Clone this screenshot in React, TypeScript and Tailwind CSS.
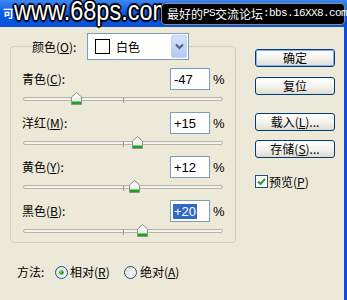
import React from "react";

const U = ({ c }: { c: string }) => <span className="underline underline-offset-[1px]">{c}</span>;

function Thumb() {
  return (
    <svg width="11" height="13" viewBox="0 0 11 13">
      <defs>
        <linearGradient id="tg" x1="0" y1="0" x2="0" y2="1">
          <stop offset="0" stopColor="#ffffff" />
          <stop offset="1" stopColor="#e6e4dc" />
        </linearGradient>
      </defs>
      <polygon points="0.5,5 5.5,0.5 10.5,5 10.5,12.5 0.5,12.5" fill="url(#tg)" stroke="#8e8f8f" strokeWidth="1" />
      <rect x="1" y="10" width="9" height="2" fill="#21a121" />
      <rect x="1" y="9" width="9" height="1" fill="#7bd17b" />
    </svg>
  );
}

function Slider({ value }: { value: number }) {
  const left = 53.5 + value * 0.995 * 0.995 + 46.5; // center-based
  const cx = 100 + value * 0.995;
  return (
    <div className="relative w-[200px] h-[14px] ml-[12px]">
      <div className="absolute left-0 right-0 top-[5px] h-[4px] rounded-full border border-[#b5b3a6] bg-[#f3f2ec]" />
      <div className="absolute left-[100px] top-[5px] w-px h-[6px] bg-[#9d9b8f]" />
      <div className="absolute top-0" style={{ left: cx - 5.5 }} data-l={left}>
        <Thumb />
      </div>
    </div>
  );
}

function Row({ label, m, value, num, selected, first }: { label: string; m: string; value: string; num: number; selected?: boolean; first?: boolean }) {
  return (
    <div className={first ? "flex flex-col" : "flex flex-col mt-[2px]"}>
      <div className="flex items-center h-[22px] pr-[12px]">
        <div className="flex-1 pl-[11px] leading-none">
          {label}(<U c={m} />):
        </div>
        <div className="w-[40px] h-[22px] border border-[#7f9db9] bg-white flex items-center pl-[2px] font-['Liberation_Sans',sans-serif] text-[13px] leading-none">
          {selected ? <span className="bg-[#316ac5] text-white px-px py-[1px]">{value}</span> : <span className="px-px">{value}</span>}
        </div>
        <div className="ml-[3px] w-[10px] font-['Liberation_Sans',sans-serif] text-[13px] leading-none">%</div>
      </div>
      <div className="h-[20px] pt-[2px]">
        <Slider value={num} />
      </div>
    </div>
  );
}

function Button({ children, def }: { children: React.ReactNode; def?: boolean }) {
  return (
    <div className="w-[80px] h-[18px] rounded-[3px] border border-[#003c74] bg-gradient-to-b from-[#ffffff] via-[#f4f3ee] to-[#dedcd2] flex items-center justify-center leading-none">
      <div className={def ? "w-full h-full rounded-[2px] border border-[#89adf0] flex items-center justify-center" : "w-full h-full flex items-center justify-center"}>
        {children}
      </div>
    </div>
  );
}

function Radio({ on }: { on?: boolean }) {
  return (
    <svg width="13" height="13" viewBox="0 0 13 13">
      <defs>
        <linearGradient id="rg" x1="0" y1="0" x2="1" y2="1">
          <stop offset="0" stopColor="#dcdbd4" />
          <stop offset="1" stopColor="#ffffff" />
        </linearGradient>
      </defs>
      <circle cx="6.5" cy="6.5" r="6" fill="url(#rg)" stroke="#1c5180" strokeWidth="1" />
      {on && <circle cx="6.5" cy="6.5" r="2.3" fill="#21a121" />}
      {on && <circle cx="6" cy="6" r="0.9" fill="#8be28b" />}
    </svg>
  );
}

export default function App() {
  return (
    <div className="w-[347px] h-[300px] bg-[#ece9d8] flex flex-col overflow-hidden font-['Noto_Sans_CJK_SC',sans-serif] text-[12px] text-black">
      <div className="h-[27px] shrink-0 flex items-center bg-gradient-to-b from-[#3d86f5] via-[#0a5ae6] to-[#0a4fd6]">
        <span className="w-[14px] pl-[3px] text-white text-[11px] font-bold leading-none">可</span>
        <div className="w-[147px] h-full relative">
          <span className="absolute left-0 top-[-3px] whitespace-nowrap origin-left scale-x-[0.84] font-['Liberation_Sans',sans-serif] text-[28px] leading-[28px] text-white [text-shadow:0_0_2px_#000,1px_1px_1px_#000,-1px_-1px_1px_#000,1px_-1px_1px_#000,-1px_1px_1px_#000,2px_0_1px_#000,-2px_0_1px_#000,0_2px_1px_#000,0_-2px_1px_#000]">
            www.68ps.com
          </span>
        </div>
        <div className="relative z-10 h-[22px] w-[184px] bg-black rounded-[4px] border border-[#8a8a8a] text-white flex items-center pl-[5px] whitespace-nowrap leading-none text-[12px]">
          最好的<span className="font-['Liberation_Mono',monospace] text-[11px] tracking-[-0.6px]">PS</span>交流论坛<span className="font-['Liberation_Mono',monospace] text-[11px] tracking-[-0.6px]">:bbs.16XX8.com</span>
        </div>
      </div>
      <div className="flex-1 flex border-r-[3px] border-[#0b50d8]">
        <div className="w-[240px] flex flex-col pt-[6px]">
          <fieldset className="ml-[10px] w-[226px] border border-[#d0d0bf] rounded-[4px] p-0 m-0">
            <legend className="ml-[21px] p-0 flex items-center">
              <span className="w-[55px] leading-none">
                颜色(<U c="O" />):
              </span>
              <div className="w-[102px] h-[27px] border border-[#7f9db9] bg-white flex items-center">
                <div className="w-[15px] h-[15px] border border-black ml-[7px]" />
                <span className="ml-[6px] flex-1 leading-none">白色</span>
                <div className="w-[16px] h-[23px] mr-[1px] rounded-[2px] bg-gradient-to-b from-[#d4e1fc] to-[#b3c9f4] border border-[#c4d4f7] flex items-center justify-center">
                  <svg width="9" height="7" viewBox="0 0 9 7">
                    <path d="M1 1.5 L4.5 5 L8 1.5" stroke="#4d6185" strokeWidth="2" fill="none" />
                  </svg>
                </div>
              </div>
            </legend>
            <div className="pt-[8px]">
              <Row first label="青色" m="C" value="-47" num={-47} />
              <Row label="洋红" m="M" value="+15" num={15} />
              <Row label="黄色" m="Y" value="+12" num={12} />
              <Row label="黑色" m="B" value="+20" num={20} selected />
            </div>
          </fieldset>
          <div className="mt-[21px] h-[16px] flex items-center pl-[17px] leading-none">
            <span className="w-[38px]">方法:</span>
            <Radio on />
            <span className="ml-[2px] w-[54px]">
              相对(<U c="R" />)
            </span>
            <Radio />
            <span className="ml-[3px]">
              绝对(<U c="A" />)
            </span>
          </div>
        </div>
        <div className="flex flex-col pt-[22px] ml-[15px]">
          <Button def>确定</Button>
          <div className="mt-[10px]">
            <Button>复位</Button>
          </div>
          <div className="mt-[18px]">
            <Button>
              载入(<U c="L" />)...
            </Button>
          </div>
          <div className="mt-[9px]">
            <Button>
              存储(<U c="S" />)...
            </Button>
          </div>
          <div className="mt-[17px] flex items-center leading-none">
            <div className="w-[13px] h-[13px] border border-[#1c5180] bg-white flex items-center justify-center">
              <svg width="9" height="9" viewBox="0 0 9 9">
                <path d="M1 4.5 L3.5 7 L8 1.8" stroke="#21a121" strokeWidth="2" fill="none" />
              </svg>
            </div>
            <span className="ml-[1px]">
              预览(<U c="P" />)
            </span>
          </div>
        </div>
      </div>
    </div>
  );
}
